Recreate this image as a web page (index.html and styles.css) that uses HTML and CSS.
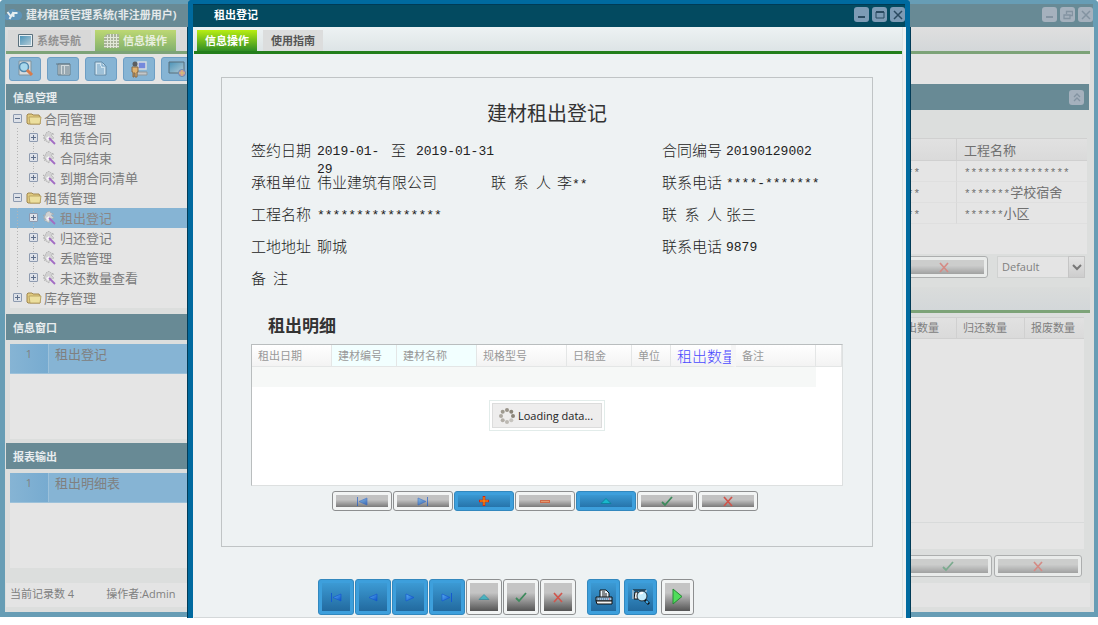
FILE: index.html
```html
<!DOCTYPE html>
<html lang="zh-CN">
<head>
<meta charset="utf-8">
<title>建材租赁管理系统</title>
<link rel="stylesheet" href="styles.css">
</head>
<body>
<svg class="sprite" aria-hidden="true">
  <defs>
    <linearGradient id="gb" x1="0" y1="0" x2="1" y2="1"><stop offset="0" stop-color="#5db4f5"/><stop offset="1" stop-color="#0b50c4"/></linearGradient>
    <linearGradient id="gs" x1="0" y1="0" x2="1" y2="1"><stop offset="0" stop-color="#4b93b8"/><stop offset="1" stop-color="#b3cbd6"/></linearGradient>
  </defs>
  <symbol id="i-min" viewBox="0 0 10 10"><path d="M1 6h7v2H1z" fill="currentColor"/></symbol>
  <symbol id="i-max" viewBox="0 0 10 10"><path d="M1 2h8v6H1z" fill="none" stroke="currentColor"/><path d="M1 2h8" stroke="currentColor" stroke-width="2"/></symbol>
  <symbol id="i-restore" viewBox="0 0 10 10"><path d="M3.500 4V1.500h6v4H7M1 5h6v3.500H1z" fill="none" stroke="currentColor" stroke-width="1.300"/></symbol>
  <symbol id="i-close" viewBox="0 0 10 10"><path d="M1 1l8 8M9 1l-8 8" stroke="currentColor" stroke-width="1.500"/></symbol>
  <symbol id="i-up2" viewBox="0 0 10 10"><path d="M2 5l3-3 3 3M2 9l3-3 3 3" fill="none" stroke="currentColor" stroke-width="1.300"/></symbol>
  <symbol id="i-first" viewBox="0 0 12 12"><path d="M1 2h1v9H1z" fill="#1559d0"/><path d="M11 3v7L3 6.500z" fill="url(#gb)" stroke="#1559d0" stroke-width=".700"/></symbol>
  <symbol id="i-last" viewBox="0 0 12 12"><path d="M10 2h1v9h-1z" fill="#1559d0"/><path d="M1 3v7l8-3.500z" fill="url(#gb)" stroke="#1559d0" stroke-width=".700"/></symbol>
  <symbol id="i-prev" viewBox="0 0 12 12"><path d="M10 3v7L2 6.500z" fill="url(#gb)" stroke="#1559d0" stroke-width=".700"/></symbol>
  <symbol id="i-next" viewBox="0 0 12 12"><path d="M2 3v7l8-3.500z" fill="url(#gb)" stroke="#1559d0" stroke-width=".700"/></symbol>
  <symbol id="i-plus" viewBox="0 0 12 12"><path d="M6 1v10M1 6h10" stroke="#d8280a" stroke-width="2.600"/><path d="M6 2v8M2 6h8" stroke="#f8a010" stroke-width="1"/></symbol>
  <symbol id="i-minus" viewBox="0 0 12 12"><path d="M1 6.500h10" stroke="#cf6a48" stroke-width="3"/><path d="M2 6.500h8" stroke="#e29a70" stroke-width="1"/></symbol>
  <symbol id="i-up" viewBox="0 0 12 12"><path d="M1 8.500l5-5 5 5z" fill="#18b8cc" stroke="#087f98" stroke-width=".800"/></symbol>
  <symbol id="i-check" viewBox="0 0 12 12"><path d="M1 7l3 3 7-8" fill="none" stroke="#3d8a5c" stroke-width="1.800"/></symbol>
  <symbol id="i-x" viewBox="0 0 12 12"><path d="M2 2l8 9M10 2l-8 9" stroke="#d0554c" stroke-width="1.700"/></symbol>
  <symbol id="i-folder" viewBox="0 0 16 14"><path d="M1 11V3l1-1h4l1 1h6l1 2v7H2z" fill="#e0cb80" stroke="#a0864e"/><path d="M3 5h12l-1 7H4z" fill="#ecdf9e" stroke="#b39a59" stroke-width=".800"/></symbol>
  <symbol id="i-wand" viewBox="0 0 14 14"><path d="M1 4l2 1 1-3 3-2 2 2 3 1-3 1 3 3-4 1-1 4-3-2-2-1 2-1-3-1 2-1z" fill="#d2d2d2" stroke="#a0a0a0" stroke-width=".700" stroke-dasharray="1.500 1"/><path d="M4 7l3-2 1 3-2 2z" fill="#f4f4f4"/><path d="M7 7l6 6" stroke="#a26cc4" stroke-width="1.800"/></symbol>
</svg>

<section class="app">
  <header class="titlebar app-title">
    <svg class="logo" viewBox="0 0 16 14" aria-hidden="true"><path d="M2 12a3 3 0 0 1 0-6 5 5 0 0 1 9-3 4 4 0 0 1 2 9z" fill="#5e94ba"/><path d="M2 4l3 4M8 4l-4 7M8 9V5h4" fill="none" stroke="#e5edf0" stroke-width="2"/></svg>
    <h1 class="title-text">建材租赁管理系统(非注册用户)</h1>
    <div class="wbtns">
      <button class="wbtn" aria-label="最小化"><svg><use href="#i-min"/></svg></button>
      <button class="wbtn" aria-label="还原"><svg><use href="#i-restore"/></svg></button>
      <button class="wbtn" aria-label="关闭"><svg><use href="#i-close"/></svg></button>
    </div>
  </header>
  <div class="app-body">
    <nav class="tabs app-tabs">
      <button class="tab"><svg class="tab-icon" viewBox="0 0 15 14"><path d="M.5.5h14v12H.5z" fill="#e6eef2" stroke="#5b707c"/><path d="M2 2h11v9H2z" fill="url(#gs)"/></svg>系统导航</button>
      <button class="tab tab-on"><svg class="tab-icon" viewBox="0 0 15 14"><path d="M3 0h12v14H0V3z" fill="#a9b29a"/><path d="M3.500 1v13M6.500 0v14M9.500 0v14M12.500 0v14M0 3.500h15M0 6.500h15M0 9.500h15M0 12.500h15" stroke="#e2e8d8"/></svg>信息操作</button>
      <button class="tab" aria-label="更多"></button>
    </nav>
    <div class="columns">
      <aside class="side">
        <div class="toolbar">
          <button class="tool" aria-label="查找"><svg viewBox="0 0 18 18"><path d="M3 1h12v14H3z" fill="#d8dbdc" stroke="#7f939e"/><circle cx="8" cy="7" r="4.500" fill="#a8d8ec" stroke="#5289ad" stroke-width="1.500"/><path d="M11 10l5 5" stroke="#d87b4b" stroke-width="3"/></svg></button>
          <button class="tool" aria-label="列表"><svg viewBox="0 0 18 18"><path d="M4 4h12v11H4z" fill="#d2dadd" stroke="#697c86"/><path d="M2 4h14M6 5v10M8 7h2M11 7h4M8 9h2M11 9h4M8 11h2M11 11h4M8 13h2M11 13h4" stroke="#657b88"/></svg></button>
          <button class="tool" aria-label="文档"><svg viewBox="0 0 18 18"><path d="M3 2h7l4 4v9H3z" fill="#d0e4f0" stroke="#6488a2"/><path d="M10 2v4h4M5 5h3M5 7h4M5 9h7M5 11h7M5 13h7" fill="none" stroke="#6d9dc0"/></svg></button>
          <button class="tool" aria-label="用户"><svg viewBox="0 0 18 18"><path d="M8 2h8v7H8z" fill="#7589dc" stroke="#d8dbe0" stroke-width="1.500"/><path d="M7 12h10v3H7z" fill="#c4c7c9" stroke="#8f979b"/><circle cx="5" cy="4" r="2.500" fill="#5b5e60"/><path d="M2 7h6v5H7v5H5v-4H4v4H3v-5H2z" fill="#dfb371" stroke="#8a6b44"/></svg></button>
          <button class="tool" aria-label="显示"><svg viewBox="0 0 18 18"><path d="M1 2h15v11H1z" fill="url(#gs)" stroke="#586e7a"/><circle cx="14" cy="13" r="3.500" fill="#c893a4" stroke="#688cb4"/><path d="M14 10v6M11 13h6" stroke="#d8c46a"/></svg></button>
        </div>
        <h2 class="panel-head">信息管理</h2>
        <ul class="tree">
          <li class="node"><i class="exp"></i><svg class="folder"><use href="#i-folder"/></svg>合同管理</li>
          <li class="node child"><i class="exp plus"></i><svg class="wand"><use href="#i-wand"/></svg>租赁合同</li>
          <li class="node child"><i class="exp plus"></i><svg class="wand"><use href="#i-wand"/></svg>合同结束</li>
          <li class="node child"><i class="exp plus"></i><svg class="wand"><use href="#i-wand"/></svg>到期合同清单</li>
          <li class="node"><i class="exp"></i><svg class="folder"><use href="#i-folder"/></svg>租赁管理</li>
          <li class="node child selected"><i class="exp plus"></i><svg class="wand"><use href="#i-wand"/></svg>租出登记</li>
          <li class="node child"><i class="exp plus"></i><svg class="wand"><use href="#i-wand"/></svg>归还登记</li>
          <li class="node child"><i class="exp plus"></i><svg class="wand"><use href="#i-wand"/></svg>丢赔管理</li>
          <li class="node child"><i class="exp plus"></i><svg class="wand"><use href="#i-wand"/></svg>未还数量查看</li>
          <li class="node"><i class="exp plus"></i><svg class="folder"><use href="#i-folder"/></svg>库存管理</li>
        </ul>
        <h2 class="panel-head">信息窗口</h2>
        <ol class="list"><li class="item"><span class="num">1</span><span class="name">租出登记</span></li></ol>
        <h2 class="panel-head">报表输出</h2>
        <ol class="list"><li class="item"><span class="num">1</span><span class="name">租出明细表</span></li></ol>
      </aside>
      <main class="main">
        <div class="blank"></div>
        <div class="panel-head main-head"><button class="wbtn" aria-label="收起"><svg><use href="#i-up2"/></svg></button></div>
        <div class="grid-box">
          <table class="grid">
            <colgroup><col><col class="c-proj"></colgroup>
            <thead><tr><th></th><th>工程名称</th></tr></thead>
            <tbody>
              <tr><td class="end"><span class="stars">**</span></td><td><span class="stars">****************</span></td></tr>
              <tr><td class="end"><span class="stars">**</span></td><td><span class="stars">*******</span>学校宿舍</td></tr>
              <tr><td class="end"><span class="stars">**</span></td><td><span class="stars">******</span>小区</td></tr>
            </tbody>
          </table>
        </div>
        <div class="row-tools">
          <button class="btn wide" aria-label="取消"><svg><use href="#i-x"/></svg></button>
          <div class="pick">
            <select class="select" aria-label="样式"><option>Default</option></select>
            <span class="arrow"><svg viewBox="0 0 10 8"><path d="M1 2l4 4 4-4" fill="none" stroke="#777" stroke-width="2"/></svg></span>
          </div>
        </div>
        <div class="strip"></div>
        <div class="sub-box">
          <table class="sub">
            <colgroup><col><col class="c-back"><col class="c-lost"></colgroup>
            <thead><tr><th class="out">租出数量</th><th>归还数量</th><th>报废数量</th></tr></thead>
          </table>
          <div class="sub-foot"></div>
        </div>
        <div class="row-tools low">
          <button class="btn wide" aria-label="确定"><svg><use href="#i-check"/></svg></button>
          <button class="btn wide" aria-label="取消"><svg><use href="#i-x"/></svg></button>
        </div>
      </main>
    </div>
    <footer class="status"><span>当前记录数 4</span><span>操作者:Admin</span></footer>
  </div>
</section>

<section class="dialog" role="dialog" aria-labelledby="dlg-title">
  <header class="titlebar dlg-title">
    <h2 class="title-text" id="dlg-title">租出登记</h2>
    <div class="wbtns">
      <button class="wbtn" aria-label="最小化"><svg><use href="#i-min"/></svg></button>
      <button class="wbtn" aria-label="最大化"><svg><use href="#i-max"/></svg></button>
      <button class="wbtn" aria-label="关闭"><svg><use href="#i-close"/></svg></button>
    </div>
  </header>
  <div class="dlg-body">
    <div class="dlg-inner">
      <nav class="tabs dlg-tabs">
        <button class="tab tab-on">信息操作</button>
        <button class="tab">使用指南</button>
      </nav>
      <div class="sheet">
        <h3 class="sheet-title">建材租出登记</h3>
        <div class="fields">
          <span class="label">签约日期</span>
          <div class="range"><span class="ascii from">2019-01-29</span><span>至</span><span class="ascii">2019-01-31</span></div>
          <span class="label third">合同编号</span><span class="ascii">20190129002</span>

          <span class="label">承租单位</span><span>伟业建筑有限公司</span>
          <span class="label">联 系 人</span><span>李<span class="ascii">**</span></span>
          <span class="label">联系电话</span><span class="ascii">****-*******</span>

          <span class="label">工程名称</span><span class="ascii">****************</span>
          <span class="label third">联 系 人</span><span>张三</span>

          <span class="label">工地地址</span><span>聊城</span>
          <span class="label third">联系电话</span><span class="ascii">9879</span>

          <span class="label short">备 注</span>
        </div>
        <h4 class="detail-title">租出明细</h4>
        <div class="detail">
          <table class="lines">
            <colgroup><col class="w80"><col class="w65"><col class="w80"><col class="w90"><col class="w65"><col class="w39"><col class="w65"><col class="w80"><col></colgroup>
            <thead><tr><th>租出日期</th><th class="key">建材编号</th><th class="key">建材名称</th><th>规格型号</th><th>日租金</th><th>单位</th><th class="qty">租出数量</th><th>备注</th><th></th></tr></thead>
            <tbody><tr><td colspan="8"></td><td class="none"></td></tr></tbody>
          </table>
          <div class="loading" role="status">
            <div class="loading-in">
              <svg class="spin" viewBox="0 0 16 16"><g fill="#8a8478"><circle cx="8" cy="2" r="2" opacity=".85"/><circle cx="12.300" cy="3.700" r="2"/><circle cx="14" cy="8" r="2"/><circle cx="12.300" cy="12.300" r="2" opacity=".4"/><circle cx="8" cy="14" r="2" opacity=".5"/><circle cx="3.700" cy="12.300" r="2" opacity=".6"/><circle cx="2" cy="8" r="2" opacity=".65"/><circle cx="3.700" cy="3.700" r="2" opacity=".8"/></g></svg>
              Loading data...
            </div>
          </div>
        </div>
        <div class="nav-small">
          <button class="btn faded" aria-label="首条"><svg><use href="#i-first"/></svg></button>
          <button class="btn faded" aria-label="末条"><svg><use href="#i-last"/></svg></button>
          <button class="btn blue" aria-label="增加"><svg><use href="#i-plus"/></svg></button>
          <button class="btn" aria-label="删除"><svg><use href="#i-minus"/></svg></button>
          <button class="btn blue" aria-label="编辑"><svg><use href="#i-up"/></svg></button>
          <button class="btn" aria-label="确定"><svg><use href="#i-check"/></svg></button>
          <button class="btn" aria-label="取消"><svg><use href="#i-x"/></svg></button>
        </div>
      </div>
      <div class="nav-big">
        <div class="group">
          <button class="btn big blue" aria-label="首条"><svg><use href="#i-first"/></svg></button>
          <button class="btn big blue" aria-label="上一条"><svg><use href="#i-prev"/></svg></button>
          <button class="btn big blue" aria-label="下一条"><svg><use href="#i-next"/></svg></button>
          <button class="btn big blue" aria-label="末条"><svg><use href="#i-last"/></svg></button>
          <button class="btn big faded" aria-label="编辑"><svg><use href="#i-up"/></svg></button>
          <button class="btn big" aria-label="确定"><svg><use href="#i-check"/></svg></button>
          <button class="btn big" aria-label="取消"><svg><use href="#i-x"/></svg></button>
        </div>
        <div class="group spaced">
          <button class="btn big blue" aria-label="打印"><svg class="pic" viewBox="0 0 18 18"><path d="M5 9V2h6l3 3v4" fill="#e8f2f8" stroke="#111"/><path d="M7 4h3M7 6h5M7 8h5" stroke="#222"/><path d="M1 9h16v4H1z" fill="#9cc0dc" stroke="#111"/><path d="M2 11h11" stroke="#426a90" stroke-dasharray="1 1"/><path d="M14 11h1" stroke="#e33"/><path d="M1 13h16v3H2z" fill="#f4f4f4" stroke="#111"/></svg></button>
          <button class="btn big blue" aria-label="预览"><svg class="pic" viewBox="0 0 18 18"><path d="M1 2h13M3 4h3v7H2z" fill="#eee" stroke="#111"/><path d="M1 2v9M14 2v2" stroke="#ddd"/><circle cx="10" cy="8" r="5" fill="#c6ecfb" stroke="#26323c"/><path d="M8 6a3 3 0 0 1 3-1" stroke="#fff" fill="none" stroke-width="2"/><path d="M13 12l4 4" stroke="#111" stroke-width="3"/><path d="M14 13l2 2" stroke="#42aef0" stroke-width="2"/></svg></button>
          <button class="btn big" aria-label="执行"><svg class="pic" viewBox="0 0 18 18"><path d="M4 1v15l9-7.500z" fill="#4fdc5a" stroke="#278a35"/></svg></button>
        </div>
      </div>
    </div>
  </div>
</section>
</body>
</html>
```

FILE: styles.css
```css
* { box-sizing: border-box; }
body {
  margin: 0;
  background: #fff;
  font: 11px/16px "Open Sans", "Noto Sans CJK SC", sans-serif;
  color: #808080;
  overflow: hidden;
}
h1, h2, h3, h4, ul, ol { margin: 0; padding: 0; font-size: inherit; list-style: none; }
button { font: inherit; color: inherit; border: 0; padding: 0; background: none; }
table { border-collapse: separate; border-spacing: 0; table-layout: fixed; width: 100%; }
th, td { padding: 0; font-weight: normal; text-align: left; }
.sprite { position: absolute; width: 0; height: 0; }

/* window chrome */
.titlebar { display: flex; align-items: center; height: 27px; padding-bottom: 2px; border-style: solid; border-width: 4px 5px 0; color: #fff; }
.title-text { flex: 1; font-weight: bold; }
.wbtns { display: flex; gap: 3px; }
.wbtn { display: flex; align-items: center; justify-content: center; width: 15px; height: 15px; border-radius: 3px; }
.wbtn svg { width: 10px; height: 10px; }

.app { position: relative; }
.app-title { background: #688a95; border-color: #679db5; color: #e4e9eb; border-radius: 4px 4px 0 0; }
.logo { width: 17px; height: 14px; margin-right: 4px; }
.app .wbtn { background: #a5b1bd; color: #8393a1; }
.app-body { border: solid #679db5; border-width: 0 4px 5px 5px; background: #dcdedd; padding: 0 4px 5px 1px; }

/* tabs */
.tabs { display: flex; gap: 4px; height: 27px; padding: 3px 2px 0; border-bottom: 3px solid #7da378; background: linear-gradient(#dfdfdf, #d3d7d9); }
.tab { display: flex; align-items: center; justify-content: center; gap: 4px; height: 21px; padding: 0 10px; font-weight: bold; background: #d8d8d8; color: #919191; }
.tab-icon { width: 15px; height: 14px; }
.app-tabs .tab-on { background: linear-gradient(#bdd873, #82b06d); color: #e8efdf; padding: 0 9px; }

/* columns behind the dialog */
.columns { display: flex; }
.side { width: 220px; flex: none; background: #dcdedd; }
.toolbar { display: flex; gap: 6px; height: 30px; padding: 3px; background: #e4e4e4; }
.tool { display: flex; align-items: center; justify-content: center; width: 32px; height: 24px; border: 1px solid #6d9ec4; border-radius: 3px; background: #86b4d4; }
.tool svg { width: 18px; height: 18px; }
.panel-head { height: 26px; padding-left: 7px; line-height: 28px; background: #688a95; color: #e8edef; font-weight: bold; }
.tree { margin: 0 0 6px 4px; background: #e5e5e5; font-size: 13px; color: #7b7b7b; }
.node { display: flex; align-items: center; height: 20px; line-height: 18px; padding: 0 0 1px 3px; }
.node:first-child { height: 18px; }
.child { padding-left: 19px; background: repeating-linear-gradient(#b4b4b4 0 1px, transparent 1px 3px) 7px 0 / 1px 100% no-repeat, repeating-linear-gradient(#b4b4b4 0 1px, transparent 1px 3px) 23px 0 / 1px 100% no-repeat; }
.selected { background-color: #86b4d4; color: #8a8686; }
.exp { width: 9px; height: 9px; border: 1px solid #8e9bb0; border-radius: 1px; background: linear-gradient(#5f6f8a, #5f6f8a) center / 5px 1px no-repeat, #dde1e8; }
.exp.plus { background: linear-gradient(#5f6f8a, #5f6f8a) center / 5px 1px no-repeat, linear-gradient(#5f6f8a, #5f6f8a) center / 1px 5px no-repeat, #dde1e8; }
.folder { width: 16px; height: 14px; margin: 0 2px 0 4px; }
.wand { width: 14px; height: 14px; margin: 0 4px; }
.list { height: 95px; margin: 4px 0 4px 4px; background: #e5e5e5; }
.list:last-child { margin-bottom: 15px; }
.item { display: flex; height: 30px; background: #86b4d4; border-bottom: 1px solid #9cc1da; color: #808080; }
.num { width: 39px; line-height: 20px; text-align: center; background: linear-gradient(90deg, #86b4d4, #77abd0); border-right: 1px solid #9cc1da; }
.name { padding-left: 6px; font-size: 13px; line-height: 20px; }

.main { flex: 1; display: flex; flex-direction: column; min-width: 0; }
.blank { height: 30px; background: #e4e4e4; }
.main-head { display: flex; justify-content: flex-end; align-items: center; margin-right: 1px; padding-right: 5px; }
.grid-box { height: 116px; margin: 28px 3px 0 0; background: #e5e5e5; }
.grid { font: 13px/20px "Noto Sans CJK SC", sans-serif; font-weight: 300; color: #707070; }
.grid th { height: 23px; border: solid #d0d0d0; border-width: 1px 0 1px 1px; background: linear-gradient(#e1e1e1, #dadada); padding-left: 7px; }
.grid td { height: 21px; border-left: 1px solid #d8d8d8; border-bottom: 1px solid #dfdfdf; padding-left: 7px; line-height: 20px; }
.c-proj { width: 131px; }
.grid .end { text-align: right; padding-right: 36px; }
.stars { font-family: "Liberation Mono", monospace; font-size: 11px; line-height: 12px; }
.row-tools { display: flex; justify-content: flex-end; gap: 9px; padding: 2px 5px 9px 0; }
.app .btn { opacity: .6; }
.pick { display: grid; width: 88px; height: 22px; }
.select { grid-area: 1 / 1; appearance: none; width: 100%; border: 1px solid #d0d2d1; border-radius: 0; background: #e4e4e4; font: inherit; color: #808080; padding: 0 4px; }
.arrow { grid-area: 1 / 1; justify-self: end; display: flex; align-items: center; justify-content: center; width: 17px; border: 1px solid #c5c5c5; background: linear-gradient(#e3e3e3, #cdcdcd); pointer-events: none; }
.arrow svg { width: 10px; height: 8px; }
.strip { height: 26px; border-bottom: 3px solid #7da378; background: linear-gradient(#dadcdb, #d3d7d9); }
.sub-box { flex: 1; display: flex; flex-direction: column; justify-content: space-between; margin: 4px 6px 0 0; background: #e5e5e5; }
.sub th { height: 22px; border: solid #d0d0d0; border-width: 1px 0 1px 1px; background: linear-gradient(#e1e1e1, #dadada); padding-left: 6px; }
.sub .out { text-align: right; padding-right: 17px; }
.c-back { width: 68px; }
.c-lost { width: 60px; }
.sub-foot { height: 27px; border-top: 1px solid #d8dada; }
.low { gap: 2px; padding: 6px 8px 6px 0; }
.status { display: flex; gap: 32px; height: 24px; padding: 0 4px; line-height: 22px; background: #e4e4e4; }

/* icon buttons */
.btn { display: flex; align-items: center; justify-content: center; width: 60px; height: 20px; padding: 3px; border: 1px solid #8d8f90; border-radius: 3px; background: linear-gradient(#c2c2c2 0 40%, #7a7a7a) content-box, #f2f4f4; }
.btn svg { width: 12px; height: 12px; }
.btn.blue { border-color: #3288be; background: linear-gradient(#3a98d2, #2674ab) content-box, #3d9fdc; }
.btn.faded svg { opacity: .65; }
.wide { width: 88px; height: 22px; }
.btn.big { width: 36px; height: 36px; background: linear-gradient(#c4c4c4 0 35%, #555) content-box, #f2f4f4; }
.btn.big.blue { background: linear-gradient(#3c9ad4, #226a9f) content-box, #3d9fdc; }
.btn .pic { width: 18px; height: 18px; }

/* dialog window floating over the app */
.dialog { position: absolute; top: 0; left: 188px; right: 188px; }
.dlg-title { background: #034a60; border-color: #006a9f; border-radius: 4px 4px 0 0; box-shadow: inset 0 1px #003b55; }
.dlg-title .title-text { padding-left: 21px; }
.dlg-title .wbtn { background: #7d9bb5; color: #2b4a60; }
.dlg-body { border: solid #006a9f; border-width: 0 4px 0 5px; box-shadow: -1px 0 #023c58, 1px 0 #023c58; background: #eef2f3; padding: 0 3px 0 1px; }
.dlg-inner { border-right: 1px solid #dde2e3; border-bottom: 1px solid #d4d8d9; }
.dlg-tabs { padding-left: 3px; border-bottom-color: #237f1b; background: linear-gradient(#edf2f3, #dde4e6); gap: 6px; }
.dlg-tabs .tab { width: 60px; padding: 0; background: #dcdddd; color: #555; }
.dlg-tabs .tab-on { background: linear-gradient(#b8ee12, #2f8d25); color: #fff; }

.sheet { margin: 23px 29px 32px 27px; height: 470px; border: 1px solid #c0c4c5; padding: 20px 29px 0; }
.sheet-title { font-size: 20px; line-height: 32px; font-weight: normal; color: #333; text-align: center; }
.fields { display: grid; grid-template-columns: 66px 174px 66px 105px 64px 1fr; grid-auto-rows: 32px; margin-top: 10px; font: 15px/20px "Noto Sans CJK SC", sans-serif; font-weight: 300; color: #222; }
.fields > span, .range { white-space: nowrap; }
.label { width: 60px; text-align-last: justify; }
.short { width: 37px; }
.third { grid-column: 5; }
.range { display: flex; gap: 10px; grid-column: 2 / 5; }
.ascii { font-family: "Liberation Mono", monospace; font-size: 13px; line-height: 24px; }
.range .from { width: 64px; padding-top: 3px; line-height: 18px; white-space: normal; }
.detail-title { margin: 14px 0 6px 17px; font-size: 17px; line-height: 24px; color: #333; }
.detail { height: 142px; border: 1px solid #b9bdbe; border-right-color: #dde0e0; border-bottom-color: #dde0e0; background: #fff; display: flex; flex-direction: column; align-items: center; gap: 13px; }
.lines { color: #999; }
.lines th { height: 22px; padding-left: 6px; border-right: 1px solid #e4e6e6; border-bottom: 1px solid #e4e6e6; background: linear-gradient(#fff, #f3f3f3); white-space: nowrap; overflow: hidden; line-height: 16px; }
.lines .key { background: #f2ffff; }
.lines .qty { font-size: 15px; font-weight: 300; color: #4a4aff; border-right-width: 5px; border-right-color: #f6f6f6; }
.lines td { height: 20px; background: #f6f8f7; }
.lines .none { background: #fff; }
.w80 { width: 80px; }
.w65 { width: 65px; }
.w90 { width: 90px; }
.w39 { width: 39px; }
.loading { border: 1px solid #e2ecea; padding: 2px; background: #fff; }
.loading-in { display: flex; align-items: center; gap: 3px; width: 110px; height: 25px; padding-left: 6px; border: 1px solid #dcdcdc; background: #eeeded; color: #222; white-space: nowrap; }
.spin { width: 16px; height: 16px; flex: none; }
.nav-small { display: flex; justify-content: center; gap: 1px; margin: 5px 5px 0 0; }
.nav-big { display: flex; gap: 11px; justify-content: center; margin-right: 84px; padding-bottom: 2px; }
.group { display: flex; gap: 1px; }
.spaced { gap: 4px; }
.spaced .btn.big { width: 33px; }
```
